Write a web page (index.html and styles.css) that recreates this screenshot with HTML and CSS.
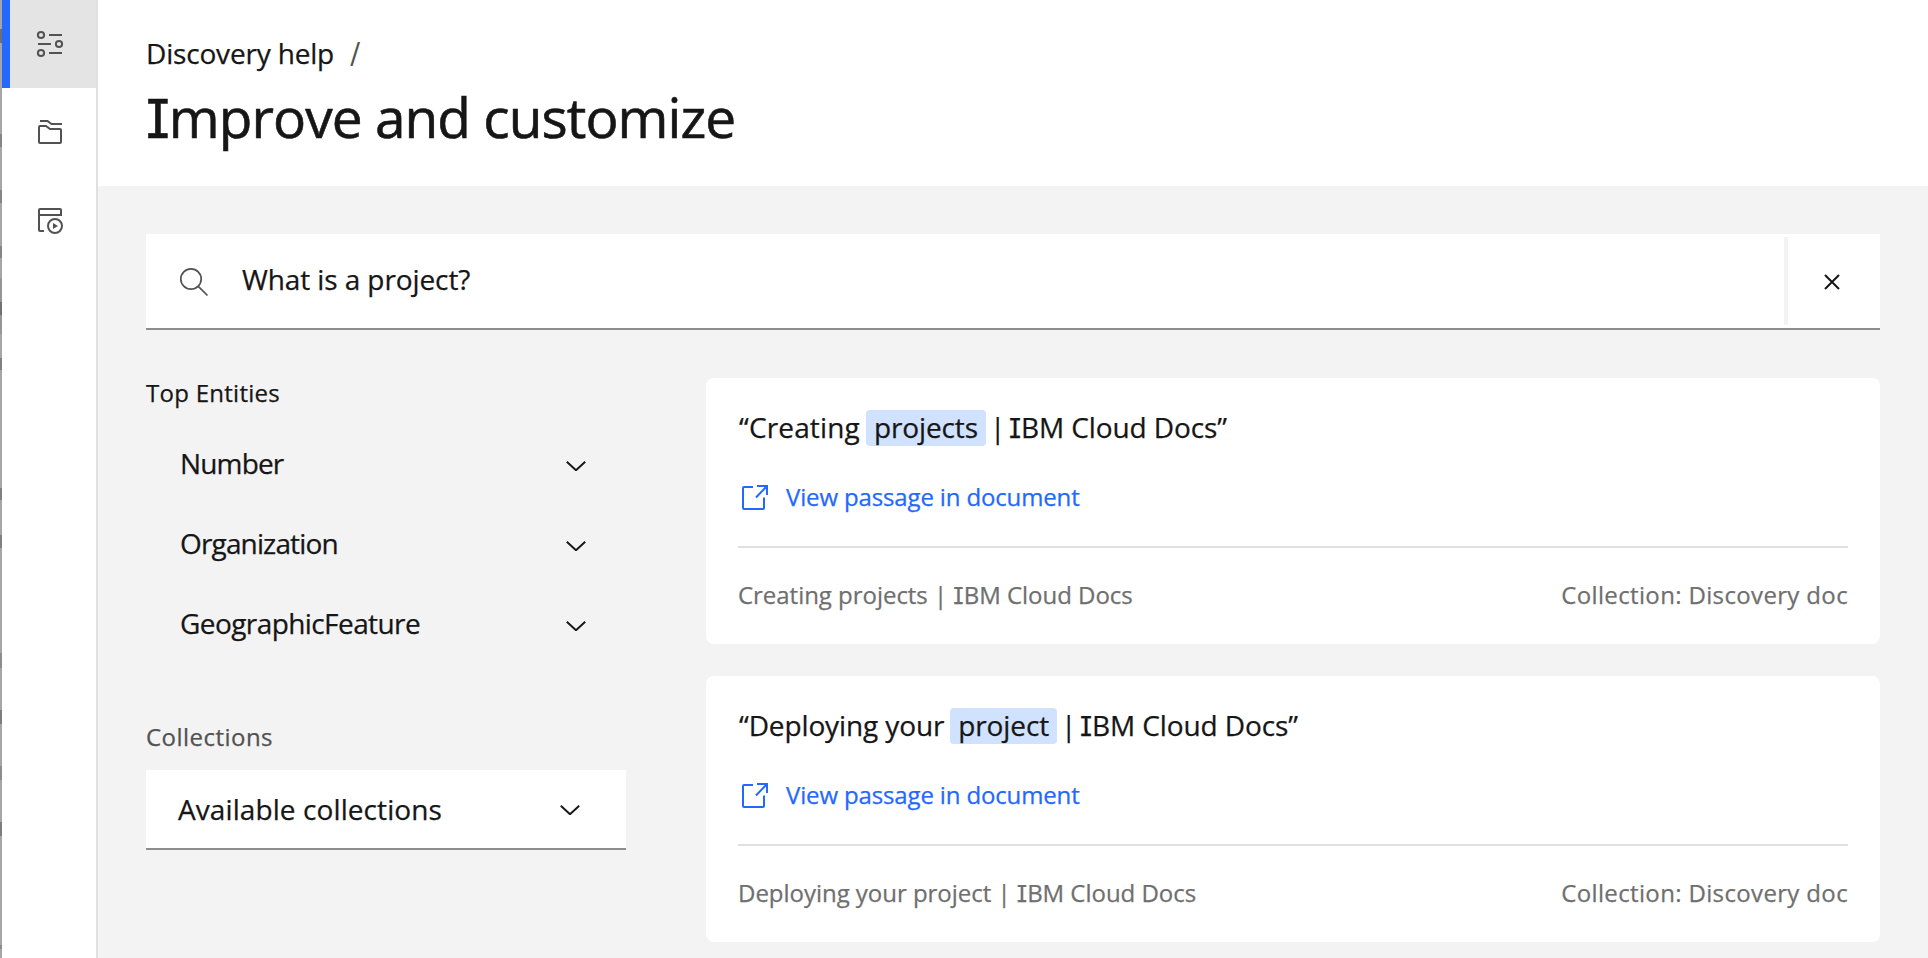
FILE: index.html
```html
<!DOCTYPE html>
<html lang="en">
<head>
<meta charset="utf-8">
<title>Discovery help</title>
<link rel="stylesheet" href="styles.css">
</head>
<body>
<div class="app">
  <div class="edge"></div>
  <nav class="rail">
    <a class="rail-item active"><svg class="icon" viewBox="0 0 32 32"><circle cx="7" cy="7" r="3.1"/><circle cx="25" cy="16" r="3.1"/><circle cx="7" cy="25" r="3.1"/><path d="M15 7H28M4 16H17M15 25H28"/></svg></a>
    <a class="rail-item"><svg class="icon" viewBox="0 0 32 32"><path d="M6 5H13.5L17.5 8H28"/><path d="M5 11a1 1 0 0 1 1-1H12L16 13H26a1 1 0 0 1 1 1V26a1 1 0 0 1-1 1H6a1 1 0 0 1-1-1Z"/></svg></a>
    <a class="rail-item"><svg class="icon" viewBox="0 0 32 32"><path d="M10 27H6a1 1 0 0 1-1-1V6a1 1 0 0 1 1-1H26a1 1 0 0 1 1 1V11H5"/><circle cx="21" cy="22" r="7"/><path class="solid" d="M19 19l5 3-5 3Z"/></svg></a>
  </nav>
  <div class="page">
    <header class="head">
      <div class="crumbs"><span class="crumb">Discovery help</span><i class="slash">/</i></div>
      <h1><b class="cap-i">I</b>mprove and customize</h1>
    </header>
    <main class="main">
      <div class="search">
        <svg class="icon thin" viewBox="0 0 32 32"><circle cx="13" cy="13" r="10.2"/><path d="M20.3 20.3L29.5 29.5"/></svg>
        <div class="query">What is a project?</div>
        <button class="clear"><svg viewBox="0 0 16 16"><path d="M1 1L15 15M15 1L1 15"/></svg></button>
      </div>
      <div class="cols">
        <aside class="facets">
          <h2>Top Entities</h2>
          <div class="facet"><span class="facet-name">Number</span><svg class="chev" viewBox="0 0 20 10"><path d="M.8.8L10 9.2 19.2.8"/></svg></div>
          <div class="facet"><span class="facet-name">Organization</span><svg class="chev" viewBox="0 0 20 10"><path d="M.8.8L10 9.2 19.2.8"/></svg></div>
          <div class="facet"><span class="facet-name long">GeographicFeature</span><svg class="chev" viewBox="0 0 20 10"><path d="M.8.8L10 9.2 19.2.8"/></svg></div>
          <label class="label">Collections</label>
          <div class="select"><span>Available collections</span><svg class="chev" viewBox="0 0 20 10"><path d="M.8.8L10 9.2 19.2.8"/></svg></div>
        </aside>
        <section class="results">
          <article class="card">
            <p class="quote"><span class="lead">“Creating</span><mark>projects</mark><span class="bar">|</span><span class="source"><b class="cap-i">I</b>BM Cloud Docs”</span></p>
            <a class="link"><svg viewBox="0 0 28 28"><path d="M13 4H4a1 1 0 0 0-1 1V25a1 1 0 0 0 1 1H23a1 1 0 0 0 1-1V14.5M17 3H27V12M27 3L16 14.5"/></svg><span>View passage in document</span></a>
            <footer class="meta"><span>Creating projects | <b class="cap-i">I</b>BM Cloud Docs</span><span class="coll">Collection: Discovery doc</span></footer>
          </article>
          <article class="card">
            <p class="quote"><span>“Deploying your</span><mark>project</mark><span class="bar">|</span><span class="source"><b class="cap-i">I</b>BM Cloud Docs”</span></p>
            <a class="link"><svg viewBox="0 0 28 28"><path d="M13 4H4a1 1 0 0 0-1 1V25a1 1 0 0 0 1 1H23a1 1 0 0 0 1-1V14.5M17 3H27V12M27 3L16 14.5"/></svg><span>View passage in document</span></a>
            <footer class="meta"><span>Deploying your project | <b class="cap-i">I</b>BM Cloud Docs</span><span class="coll">Collection: Discovery doc</span></footer>
          </article>
        </section>
      </div>
    </main>
  </div>
</div>
</body>
</html>
```
FILE: styles.css
```css
* { box-sizing: border-box; }
body {
  margin: 0;
  height: 958px;
  overflow: hidden;
  background: #f3f3f3;
  color: #161616;
  font-family: "Open Sans", "Noto Sans", sans-serif;
  font-size: 28px;
  line-height: 40px;
  -webkit-text-stroke: .25px;
}
svg { display: block; flex: none; fill: none; stroke: currentColor; stroke-width: 2; }
.cap-i { font-family: Inter, sans-serif; font-weight: inherit; font-size: .98em; font-feature-settings: "cv08"; line-height: 1; }
.app { display: flex; height: 958px; }
.edge {
  width: 2px;
  background: linear-gradient(#a6a6a6 29px, #707070 29px 43px, #a6a6a6 43px 134px, #858585 134px 147px, #a6a6a6 147px 190px, #858585 190px 203px, #a6a6a6 203px 246px, #858585 246px 258px, #a6a6a6 258px 278px, #969696 278px 302px, #707070 302px 315px, #969696 315px 334px, #a6a6a6 334px 358px, #808080 358px 370px, #a6a6a6 370px 488px, #808080 488px 500px, #a6a6a6 500px 535px, #808080 535px 548px, #a6a6a6 548px 653px, #8c8c8c 653px 668px, #a6a6a6 668px 710px, #7d7d7d 710px 724px, #a6a6a6 724px 766px, #8c8c8c 766px 780px, #a6a6a6 780px 822px, #7d7d7d 822px 836px, #a6a6a6 836px 945px, #8c8c8c 945px 949px, #a6a6a6 949px);
}
.rail { width: 96px; background: #fff; border-right: 2px solid #e0e0e0; color: #525252; }
.rail-item { display: flex; align-items: center; height: 88px; padding-left: 32px; }
.rail-item.active { background: #e4e4e4; border-left: 8px solid #2468ff; padding-left: 24px; }
.icon { width: 32px; height: 32px; }
.icon .solid { fill: currentColor; stroke: none; }
.page { flex: 1; }
.head { height: 186px; padding: 33px 48px 0; background: #fff; }
.crumbs { display: flex; gap: 16px; height: 40px; }
.crumb { letter-spacing: -.18px; }
.slash { color: #525252; font-style: normal; font-size: 33px; line-height: 42px; -webkit-text-stroke: 0; transform: scaleX(.85); transform-origin: left; }
h1 { margin: 8px 0 0; font-size: 55px; font-weight: 400; line-height: 72px; letter-spacing: -.95px; -webkit-text-stroke: .6px; }
.main { padding: 48px 48px 0; }
.search { display: flex; align-items: center; height: 96px; padding-left: 32px; background: #fff; border-bottom: 2px solid #8d8d8d; }
.thin { margin-top: 1px; stroke-width: 1.7; color: #525252; }
.query { flex: 1; padding: 0 0 5px 32px; letter-spacing: -.1px; }
.clear { display: flex; align-items: center; width: 96px; height: 88px; padding: 1px 0 0 36px; border: 0; border-left: 4px solid #f3f3f3; background: none; color: #161616; }
.clear svg { width: 16px; height: 16px; }
.cols { display: flex; gap: 80px; padding-top: 48px; }
.facets { width: 480px; }
h2 { margin: -1px 0 17px; font-size: 24px; font-weight: 400; line-height: 32px; letter-spacing: .27px; }
.facet { display: flex; align-items: center; justify-content: space-between; height: 80px; padding: 0 40px 0 34px; }
.facet-name { padding-bottom: 7px; letter-spacing: -.85px; }
.facet-name.long { letter-spacing: -.58px; }
.chev { width: 20px; height: 10px; }
.label { display: block; margin-top: 55px; font-size: 24px; line-height: 32px; color: #525252; letter-spacing: .467px; }
.select { display: flex; align-items: center; justify-content: space-between; height: 80px; margin-top: 17px; padding: 0 46px 0 32px; background: #fff; border-bottom: 2px solid #8d8d8d; letter-spacing: .09px; }
.select .chev { margin-top: 2px; }
.results { flex: 1; display: grid; gap: 32px; }
.card { height: 266px; padding: 29px 32px 0; border-radius: 8px; background: #fff; }
.quote { display: flex; margin: 0; padding-left: 1px; white-space: pre; letter-spacing: -.12px; }
.lead { letter-spacing: .15px; }
mark { height: 36px; margin: 3px 7px 0 6px; padding: 0 8px; border-radius: 4px; background: #d0e2ff; color: inherit; line-height: 34px; }
.bar { width: 19px; margin-left: -3px; }
.source { letter-spacing: -.1px; }
.link { display: flex; align-items: center; height: 40px; margin-top: 30px; padding-left: 2px; gap: 18px; color: #2468ff; font-size: 24px; letter-spacing: -.14px; }
.link svg { width: 28px; height: 28px; }
.meta { display: flex; justify-content: space-between; margin-top: 29px; padding-top: 27px; border-top: 2px solid #e0e0e0; color: #6f6f6f; font-size: 24px; letter-spacing: -.03px; }
.coll { letter-spacing: .35px; }
```
